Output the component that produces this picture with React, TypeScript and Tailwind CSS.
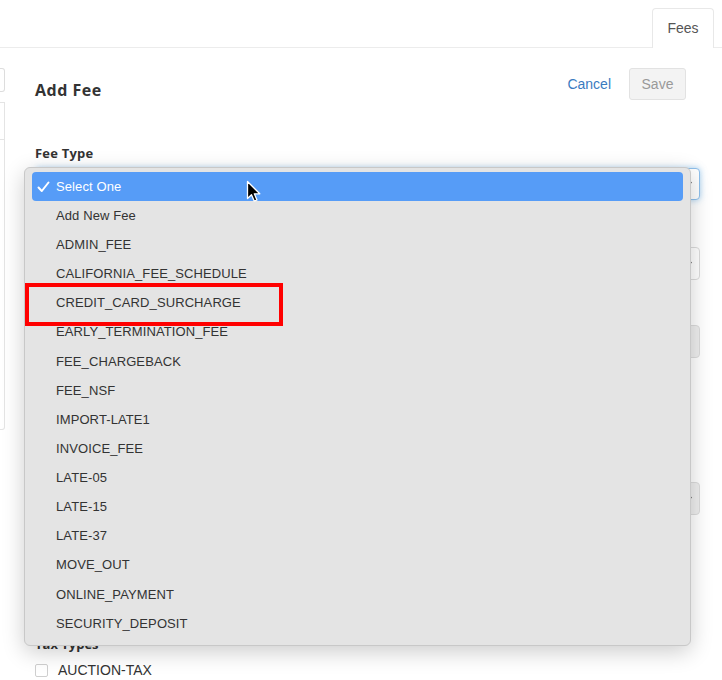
import React from "react";

const options = [
  "Add New Fee",
  "ADMIN_FEE",
  "CALIFORNIA_FEE_SCHEDULE",
  "CREDIT_CARD_SURCHARGE",
  "EARLY_TERMINATION_FEE",
  "FEE_CHARGEBACK",
  "FEE_NSF",
  "IMPORT-LATE1",
  "INVOICE_FEE",
  "LATE-05",
  "LATE-15",
  "LATE-37",
  "MOVE_OUT",
  "ONLINE_PAYMENT",
  "SECURITY_DEPOSIT",
];

function Chevron() {
  return (
    <svg width="8" height="6" viewBox="0 0 8 6" className="absolute right-[4px] top-1/2 -translate-y-1/2">
      <path d="M1 4.5 L4 1.5" stroke="#444" strokeWidth="1.4" fill="none" strokeLinecap="round" />
    </svg>
  );
}

export default function App() {
  return (
    <div className="relative w-[722px] h-[680px] overflow-hidden bg-white font-['Liberation_Sans',Arial,sans-serif] text-[#333]">
      {/* top tab bar */}
      <div className="h-[48px] border-b border-[#ececec] flex justify-end items-end pr-[8px]">
        <div className="w-[62px] h-[40px] -mb-px bg-white border border-b-0 border-[#e8e8e8] rounded-t-[4px] flex items-center justify-center text-[14px] text-[#555]">
          Fees
        </div>
      </div>

      <div className="flex">
        {/* left panel edge */}
        <div className="w-[5px] shrink-0">
          <div className="mt-[20px] h-[24px] border border-l-0 border-[#dddddd] rounded-r-[3px]" />
          <div className="mt-[10px] h-[328px] border border-l-0 border-[#e4e4e4] rounded-br-[3px]">
            <div className="h-[37px] border-b border-[#e4e4e4]" />
          </div>
        </div>

        {/* main form */}
        <div className="flex-1 pl-[30px] pr-[22px]">
          <div className="mt-[20px] flex items-start justify-between">
            <div className="pt-[12px] text-[16px] leading-[20px] font-bold tracking-[0.5px] text-[#333] font-['Open_Sans',sans-serif]">
              Add Fee
            </div>
            <div className="flex items-center gap-[18px] mr-[14px] h-[32px]">
              <span className="text-[14px] text-[#3a7bbf]">Cancel</span>
              <div className="w-[57px] h-[32px] rounded-[3px] border border-[#e2e2e2] bg-[#f3f3f3] text-[14px] text-[#999] flex items-center justify-center">
                Save
              </div>
            </div>
          </div>

          <div className="mt-[45px] text-[13px] leading-[16px] font-bold tracking-[0.2px] text-[#333] font-['Open_Sans',sans-serif]">
            Fee Type
          </div>
          <div className="relative mt-[7px] h-[32px] rounded-[4px] border border-[#8fc0ec] bg-white shadow-[0_0_6px_rgba(102,175,233,0.6)]">
            <Chevron />
          </div>
          <div className="relative mt-[47px] h-[33px] rounded-[4px] border border-[#dcdcdc] bg-white">
            <Chevron />
          </div>
          <div className="relative mt-[45px] h-[33px] rounded-[4px] border border-[#dcdcdc] bg-[#eeeeee]" />
          <div className="relative mt-[124px] h-[33px] rounded-[4px] border border-[#dcdcdc] bg-[#eeeeee]">
            <Chevron />
          </div>

          <div className="mt-[121px] text-[13px] leading-[16px] font-bold text-[#333] font-['Open_Sans',sans-serif]">
            Tax Types
          </div>
          <div className="mt-[10px] flex items-center gap-[10px] h-[16px]">
            <div className="w-[13px] h-[13px] rounded-[2px] border border-[#cfcfcf] bg-white" />
            <span className="text-[14px] leading-[16px] text-[#333]">AUCTION-TAX</span>
          </div>
        </div>
      </div>

      {/* native select popup */}
      <div className="absolute left-[24px] top-[167px] w-[667px] h-[479px] rounded-[6px] border border-[#c8c8c8] bg-[#e4e4e4] shadow-[0_6px_22px_rgba(0,0,0,0.2)] pt-[4px] px-[7px]">
        <div className="relative h-[29.13px] rounded-[4px] bg-[#569cf7] flex items-center pl-[24px] text-[13px] tracking-[0.1px] text-white">
          <svg width="13" height="12" viewBox="0 0 13 12" className="absolute left-[5px] top-[9px]">
            <path d="M1.5 6.5 L4.8 10 L11.5 1.5" stroke="#fff" strokeWidth="2" fill="none" strokeLinecap="round" strokeLinejoin="round" />
          </svg>
          Select One
        </div>
        {options.map((o) => (
          <div key={o} className="h-[29.13px] flex items-center pl-[24px] text-[13px] tracking-[0.1px] text-[#333]">
            {o}
          </div>
        ))}
      </div>

      {/* red highlight box */}
      <div className="absolute left-[25px] top-[283px] w-[258px] h-[43px] border-[4px] border-[#ff0000]" />

      {/* mouse cursor */}
      <svg width="16" height="24" viewBox="0 0 16 24" className="absolute left-[246px] top-[180px]">
        <path d="M1.5 1.5 L1.5 18.5 L5.5 14.8 L8.3 21.2 L11 20 L8.3 13.8 L13.8 13.8 Z" fill="#000" stroke="#fff" strokeWidth="1.3" strokeLinejoin="round" />
      </svg>
    </div>
  );
}
